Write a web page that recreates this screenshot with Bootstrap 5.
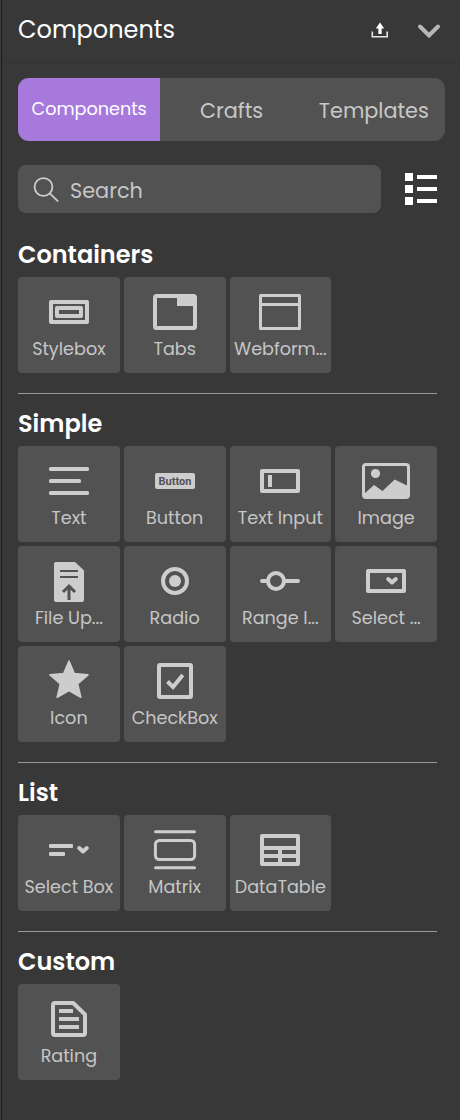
<!DOCTYPE html>
<html lang="en">
<head>
<meta charset="utf-8">
<title>Components</title>
<meta name="viewport" content="width=device-width, initial-scale=1">
<link href="https://cdn.jsdelivr.net/npm/bootstrap@5.3.0/dist/css/bootstrap.min.css" rel="stylesheet">
<style>
  body { background: #383838; color: #fff; font-family: Poppins, Inter, "Open Sans", sans-serif; }
  .panel { min-height: 1120px; border-left: 1px solid #3c3c3c; box-shadow: inset 1px 0 0 #1d1d1d; padding-left: 17px; }
  .panel-head { height: 62px; margin-left: -16px; padding: 0 19px 1px 16px; box-shadow: 0 1px 3px rgba(0, 0, 0, .1); }
  .panel-title { font-size: 24px; line-height: 36px; margin-bottom: 1px; }
  .tabs-bar { width: 427px; height: 63px; margin-top: 16px; border-radius: 11px; background: #525252; }
  .tabs-bar .nav-link { height: 63px; border-radius: 0; padding: 2px 0 0; color: #c8c8c8; font-size: 20.8px; }
  .tabs-bar .nav-link.active { background: #a879dd; color: #fff; font-size: 17.6px; padding: 0; }
  .search-row { margin-top: 24px; gap: 24px; }
  .search-box { width: 363px; height: 48px; border-radius: 8px; background: #525252; color: #c6c6c6; font-size: 20.8px; padding: 1px 0 0 15px; gap: 11px; }
  .search-box span { padding-top: 2px; }
  .section { width: 419px; }
  .section + .section { border-top: 1px solid #9798a0; margin-top: 20px; padding-top: 12px; }
  .section-title { height: 36px; line-height: 36px; margin: 0 0 4px; font-size: 24px; font-weight: 600; }
  .first-section { margin-top: 24px; }
  .tiles { display: grid; grid-template-columns: repeat(4, 1fr); gap: 4px; }
  .tile { height: 96px; padding-top: 11px; border-radius: 4px; background: #525252; color: #c6c6c6; font-size: 17.6px; line-height: 26px; white-space: nowrap; overflow: hidden; }
  .tile svg { display: block; flex: none; }
  .ic { fill: none; stroke: #cdcdcd; stroke-width: 4; stroke-linejoin: round; }
  .ic .solid { fill: #cdcdcd; stroke: none; }
  .ic .cut { fill: #525252; stroke: none; }
  .ic .cap { stroke-linecap: round; }
  .ic .arrow { stroke: #525252; stroke-width: 3; stroke-linejoin: miter; }
  .ic .star { fill: #cdcdcd; stroke-width: 1.6; }
  .ic .tick { stroke-linejoin: miter; }
  .ic text { font: 700 11px Roboto, sans-serif; }
</style>
</head>
<body>
<main class="panel">
  <header class="panel-head d-flex align-items-center justify-content-between">
    <span class="panel-title">Components</span>
    <span class="d-flex align-items-center">
      <svg width="18" height="18" viewBox="0 0 18 18" class="me-4"><path d="M1.3 9.5V14.7H16.2V9.5" fill="none" stroke="#e4e4e4" stroke-width="1.6"/><path d="M9 .5L13.2 6.5H10.6V12H7.4V6.5H4.8Z" fill="#fff"/></svg>
      <svg width="24" height="18" viewBox="0 0 24 18" class="ms-1"><path d="M3 4.5L12 13.5L21 4.5" fill="none" stroke="#b7b7bb" stroke-width="4" stroke-linecap="round"/></svg>
    </span>
  </header>

  <nav class="tabs-bar nav nav-pills nav-fill overflow-hidden">
    <a class="nav-link active col-4 d-flex align-items-center justify-content-center" href="#">Components</a>
    <a class="nav-link col-4 d-flex align-items-center justify-content-center" href="#">Crafts</a>
    <a class="nav-link col-4 d-flex align-items-center justify-content-center" href="#">Templates</a>
  </nav>

  <div class="search-row d-flex align-items-center">
    <div class="search-box d-flex align-items-center">
      <svg width="26" height="26" viewBox="0 0 26 26" fill="none" stroke="#cdcdcd" stroke-width="1.8"><circle cx="10.5" cy="10" r="8.9"/><path d="M16.8 16.3L25 24.3"/></svg>
      <span>Search</span>
    </div>
    <svg width="32" height="32" viewBox="0 0 32 32" fill="#fff"><path d="M0 0H8V8H0ZM0 12H8V20H0ZM0 24H8V32H0ZM12 2H32V6H12ZM12 14H32V18H12ZM12 26H32V30H12Z"/></svg>
  </div>

  <section class="section first-section">
    <h2 class="section-title">Containers</h2>
    <div class="tiles">
      <div class="tile d-flex flex-column align-items-center">
        <svg class="ic" width="48" height="48"><rect x="6" y="14" width="36" height="20"/><rect x="12" y="20" width="24" height="8"/></svg>
        <span>Stylebox</span>
      </div>
      <div class="tile d-flex flex-column align-items-center">
        <svg class="ic" width="48" height="48"><rect x="4" y="8" width="40" height="32" rx="1.5"/><path class="solid" d="M26 8H44V18H26Z"/></svg>
        <span>Tabs</span>
      </div>
      <div class="tile d-flex flex-column align-items-center">
        <svg class="ic" width="48" height="48"><g stroke-width="3"><rect x="4.5" y="7.5" width="39" height="33"/><path d="M4.5 16.5H43.5"/></g></svg>
        <span>Webform...</span>
      </div>
    </div>
  </section>

  <section class="section">
    <h2 class="section-title">Simple</h2>
    <div class="tiles">
      <div class="tile d-flex flex-column align-items-center">
        <svg class="ic" width="48" height="48"><g class="solid"><rect x="4" y="10" width="40" height="4" rx="1.5"/><rect x="4" y="22" width="32" height="4" rx="1.5"/><rect x="4" y="34" width="40" height="4" rx="1.5"/></g></svg>
        <span>Text</span>
      </div>
      <div class="tile d-flex flex-column align-items-center">
        <svg class="ic" width="48" height="48"><rect class="solid" x="4" y="16" width="40" height="16" rx="2"/><text class="cut" x="24" y="28" text-anchor="middle" textLength="33">Button</text></svg>
        <span>Button</span>
      </div>
      <div class="tile d-flex flex-column align-items-center">
        <svg class="ic" width="48" height="48"><rect x="6" y="14" width="36" height="20"/><path class="solid" d="M12 18H16V30H12Z"/></svg>
        <span>Text Input</span>
      </div>
      <div class="tile d-flex flex-column align-items-center">
        <svg class="ic" width="48" height="48"><rect x="1.5" y="7.5" width="45" height="33" rx="2.5" stroke-width="3"/><circle class="solid" cx="13.5" cy="16.5" r="4.6"/><path class="solid" d="M2 37L12 28L20.5 34L32.7 22.5L46 29V41H2Z"/></svg>
        <span>Image</span>
      </div>
      <div class="tile d-flex flex-column align-items-center">
        <svg class="ic" width="48" height="48"><path class="solid" d="M11 5H30L39 13.5V43Q39 45 37 45H11Q9 45 9 43V7Q9 5 11 5Z"/><path class="cut" d="M15 13H33V15H15ZM15 19H33V21H15Z"/><path class="arrow" d="M24 43V29M18 35L24 29L30 35"/></svg>
        <span>File Up...</span>
      </div>
      <div class="tile d-flex flex-column align-items-center">
        <svg class="ic" width="48" height="48"><circle cx="24" cy="24" r="12"/><circle class="solid" cx="24" cy="24" r="6"/></svg>
        <span>Radio</span>
      </div>
      <div class="tile d-flex flex-column align-items-center">
        <svg class="ic" width="48" height="48"><circle cx="20" cy="24" r="8"/><path class="cap" d="M6 24H11M29 24H42"/></svg>
        <span>Range I...</span>
      </div>
      <div class="tile d-flex flex-column align-items-center">
        <svg class="ic" width="48" height="48"><rect x="6" y="14" width="36" height="20"/><path class="cap" d="M26.2 22L30 25.4L33.8 22"/></svg>
        <span>Select ...</span>
      </div>
      <div class="tile d-flex flex-column align-items-center">
        <svg class="ic" width="48" height="48"><path class="star" d="M24 4L29.3 16.6L43 17.8L32.6 26.8L35.8 40.3L24 33.5L12.2 40.3L15.4 26.8L5 17.8L18.7 16.6Z"/></svg>
        <span>Icon</span>
      </div>
      <div class="tile d-flex flex-column align-items-center">
        <svg class="ic" width="48" height="48"><rect x="8" y="8" width="32" height="32" rx="1"/><path class="tick" d="M16.5 24.5L22 30L31.8 18"/></svg>
        <span>CheckBox</span>
      </div>
    </div>
  </section>

  <section class="section">
    <h2 class="section-title">List</h2>
    <div class="tiles">
      <div class="tile d-flex flex-column align-items-center">
        <svg class="ic" width="48" height="48"><g class="solid"><rect x="4" y="18" width="24" height="4" rx="1"/><rect x="4" y="26" width="16" height="4" rx="1"/></g><path class="cap" d="M34.2 22L38 25.4L41.8 22"/></svg>
        <span>Select Box</span>
      </div>
      <div class="tile d-flex flex-column align-items-center">
        <svg class="ic" width="48" height="48"><g stroke-width="3"><rect x="4.4" y="14.4" width="39.2" height="19.2" rx="4"/><path class="cap" d="M4.5 5.8H43.5M4.5 41.8H43.5"/></g></svg>
        <span>Matrix</span>
      </div>
      <div class="tile d-flex flex-column align-items-center">
        <svg class="ic" width="48" height="48"><rect class="solid" x="4" y="8" width="40" height="32" rx="2"/><path class="cut" d="M8 12H40V20H8ZM8 24H22V28H8ZM26 24H40V28H26ZM8 32H22V36H8ZM26 32H40V36H26Z"/></svg>
        <span>DataTable</span>
      </div>
    </div>
  </section>

  <section class="section">
    <h2 class="section-title">Custom</h2>
    <div class="tiles">
      <div class="tile d-flex flex-column align-items-center">
        <svg class="ic" width="48" height="48"><path d="M10 8H28.2L40 19.5V38Q40 40 38 40H10Q8 40 8 38V10Q8 8 10 8Z"/><path class="solid" d="M14 14H28V18H14ZM14 22H34V26H14ZM14 30H34V34H14Z"/></svg>
        <span>Rating</span>
      </div>
    </div>
  </section>
</main>
<script src="https://cdn.jsdelivr.net/npm/bootstrap@5.3.0/dist/js/bootstrap.bundle.min.js"></script>
</body>
</html>
